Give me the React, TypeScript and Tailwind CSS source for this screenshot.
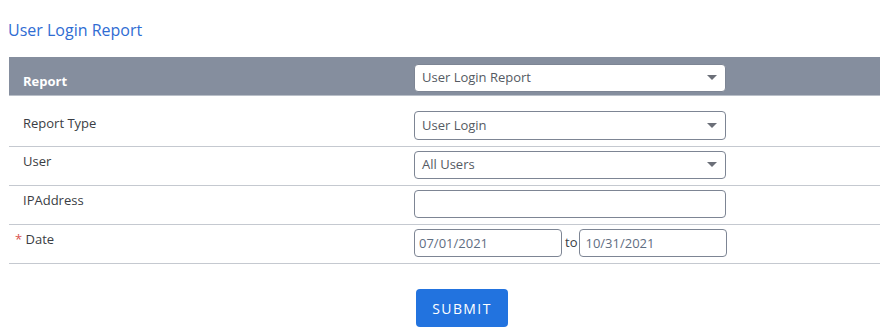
import { useState } from 'react'

function Caret(): React.JSX.Element {
  return (
    <svg width="10" height="6" viewBox="0 0 10 6" className="shrink-0">
      <polygon points="0,0 10,0 5,5" fill="#6b6f78" />
    </svg>
  )
}

interface SelectBoxProps {
  value: string
  tall?: boolean
}

function SelectBox({ value, tall }: SelectBoxProps): React.JSX.Element {
  return (
    <div
      className={`flex w-[312px] items-center justify-between rounded-[4px] border border-[#7d8594] bg-white pl-[7px] pr-[8px] ${
        tall ? 'h-[29px]' : 'h-[28px]'
      }`}
    >
      <span className="text-[13px] text-[#555a63]">{value}</span>
      <Caret />
    </div>
  )
}

function App(): React.JSX.Element {
  const [ip, setIp] = useState('')
  const [from, setFrom] = useState('07/01/2021')
  const [to, setTo] = useState('10/31/2021')

  const label = 'w-[405px] shrink-0 pl-[14px] text-[13px] leading-[20px] text-[#3a3d44]'
  const row = 'flex items-start border-b border-[#c5c9d0] pb-[6px]'

  return (
    <div className="min-h-[333px] bg-white pl-[9px] font-['Open_Sans','Noto_Sans',sans-serif]">
      <div className="-ml-[1px] pt-[19px] pb-[16px] text-[16px] leading-[22px] text-[#2f6cd3]">
        User Login Report
      </div>

      <div className="flex h-[39px] items-start border-b border-[#b9bfc8] bg-[#858e9e]">
        <div className="w-[405px] shrink-0 pl-[14px] pt-[14px] text-[13px] font-bold leading-[20px] text-white">
          Report
        </div>
        <div className="pt-[7px]">
          <div className="flex h-[28px] w-[312px] items-center justify-between rounded-[4px] border border-[#7d8594] bg-white pl-[7px] pr-[8px]">
            <span className="text-[13px] text-[#555a63]">User Login Report</span>
            <Caret />
          </div>
        </div>
      </div>

      <div className={row}>
        <div className={`${label} pt-[17px]`}>Report Type</div>
        <div className="pt-[15px]">
          <SelectBox value="User Login" tall />
        </div>
      </div>

      <div className={row}>
        <div className={`${label} pt-[4px]`}>User</div>
        <div className="pt-[4px]">
          <SelectBox value="All Users" />
        </div>
      </div>

      <div className={row}>
        <div className={`${label} pt-[4px]`}>IPAddress</div>
        <div className="pt-[4px]">
          <input
            value={ip}
            onChange={(event) => setIp(event.target.value)}
            className="h-[28px] w-[312px] rounded-[4px] border border-[#7d8594] bg-white px-[6px] text-[13px] text-[#555a63] focus:outline-none"
          />
        </div>
      </div>

      <div className={row}>
        <div className="w-[405px] shrink-0 pl-[6px] pt-[4px] text-[13px] leading-[20px] text-[#3a3d44]">
          <span className="text-[#d9534f]">*</span> Date
        </div>
        <div className="flex items-center pt-[4px]">
          <input
            value={from}
            onChange={(event) => setFrom(event.target.value)}
            className="h-[28px] w-[148px] rounded-[4px] border border-[#7d8594] bg-white px-[4px] text-[13px] text-[#5f6e82] focus:outline-none"
          />
          <span className="pl-[3px] pr-[2px] text-[13px] text-[#3a3d44]">to</span>
          <input
            value={to}
            onChange={(event) => setTo(event.target.value)}
            className="h-[28px] w-[148px] rounded-[4px] border border-[#7d8594] bg-white px-[5px] text-[13px] text-[#5f6e82] focus:outline-none"
          />
        </div>
      </div>

      <div className="pl-[407px] pt-[25px]">
        <button
          type="button"
          className="h-[38px] w-[92px] rounded-[4px] bg-[#2273df] text-[14px] tracking-[0.1em] text-white"
        >
          SUBMIT
        </button>
      </div>
    </div>
  )
}

export default App
